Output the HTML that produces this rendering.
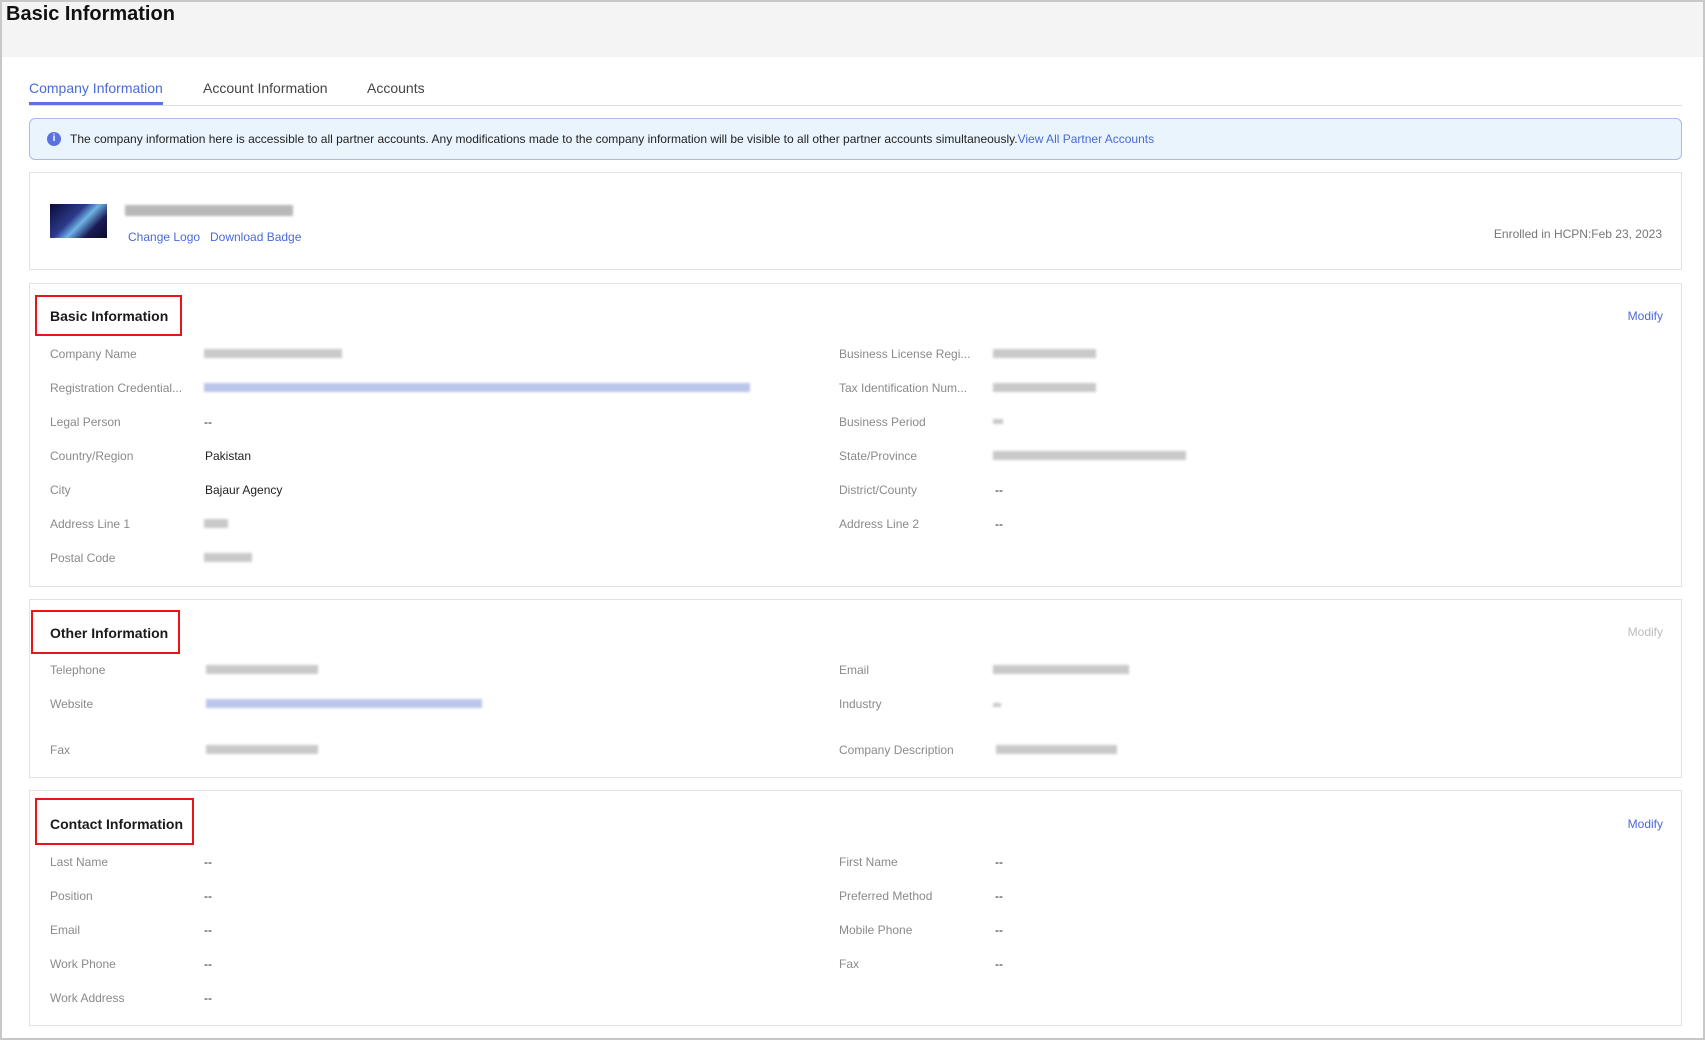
<!DOCTYPE html>
<html><head><meta charset="utf-8"><style>
*{margin:0;padding:0;box-sizing:border-box}
body{width:1705px;height:1040px;position:relative;background:#fff;font-family:"Liberation Sans",Arial,sans-serif;overflow:hidden}
.a{position:absolute;white-space:nowrap}
.frame{position:absolute;left:0;top:0;width:1705px;height:1040px;border:2px solid #c8c8c8;pointer-events:none}
.hdr{position:absolute;left:0;top:0;width:1705px;height:57px;background:#f4f4f4}
.card{position:absolute;left:29px;width:1653px;border:1px solid #e2e2e2;background:#fff}
.red{position:absolute;border:2px solid #e8141a}
.h{font-size:14px;font-weight:bold;color:#1a1a1a}
.l{font-size:12px;color:#8a8a8a;margin-top:1px}
.v{font-size:12px;color:#222;margin-top:1px}
.blue{color:#4a6ad8}
.blur{position:absolute;height:9px;background:#c9c9c9;filter:blur(1.2px);margin-top:1px}
.bb{background:#bcc6ec}
</style></head><body>
<div class="hdr"></div>
<div class="a" style="left:6px;top:3px;font-size:20px;font-weight:bold;color:#111">Basic Information</div>

<div class="a" style="left:29px;top:80px;font-size:14px;color:#4a6ad8">Company Information</div>
<div class="a" style="left:203px;top:80px;font-size:14px;color:#444">Account Information</div>
<div class="a" style="left:367px;top:80px;font-size:14px;color:#444">Accounts</div>
<div class="a" style="left:29px;top:105px;width:1653px;height:1px;background:#dedede"></div>
<div class="a" style="left:29px;top:102px;width:134px;height:3px;background:#5b73e0"></div>

<div class="a" style="left:29px;top:118px;width:1653px;height:42px;background:#e9f4fd;border:1px solid #aab9ee;border-radius:6px"></div>
<div class="a" style="left:47px;top:132px;width:14px;height:14px;border-radius:50%;background:#5b73e0;color:#fff;font-size:10px;font-weight:bold;text-align:center;line-height:14px">i</div>
<div class="a" style="left:70px;top:132px;font-size:12px;color:#222">The company information here is accessible to all partner accounts. Any modifications made to the company information will be visible to all other partner accounts simultaneously.<span class="blue">View All Partner Accounts</span></div>

<div class="card" style="top:172px;height:98px"></div>
<div class="a" style="left:50px;top:204px;width:57px;height:34px;background:linear-gradient(135deg,#0b0b3a,#2b3a8a 40%,#6fb3e6 55%,#1a1a55 75%,#0a0a2a)"></div>
<div class="blur" style="left:125px;top:204px;width:168px;height:11px;background:#b8b8b8"></div>
<div class="a blue" style="left:128px;top:230px;font-size:12px">Change Logo</div>
<div class="a blue" style="left:210px;top:230px;font-size:12px">Download Badge</div>
<div class="a" style="right:43px;top:227px;font-size:12px;color:#777">Enrolled in HCPN:Feb 23, 2023</div>

<!-- basic -->
<div class="card" style="top:283px;height:304px"></div>
<div class="red" style="left:35px;top:295px;width:147px;height:41px"></div>
<div class="a h" style="left:50px;top:308px">Basic Information</div>
<div class="a blue" style="right:42px;top:309px;font-size:12px">Modify</div>

<div class="a l" style="left:50px;top:346px">Company Name</div><div class="blur" style="left:204px;top:348px;width:138px"></div>
<div class="a l" style="left:839px;top:346px">Business License Regi...</div><div class="blur" style="left:993px;top:348px;width:103px"></div>
<div class="a l" style="left:50px;top:380px">Registration Credential...</div><div class="blur bb" style="left:204px;top:382px;width:546px"></div>
<div class="a l" style="left:839px;top:380px">Tax Identification Num...</div><div class="blur" style="left:993px;top:382px;width:103px"></div>
<div class="a l" style="left:50px;top:414px">Legal Person</div><div class="a v" style="left:204px;top:414px">--</div>
<div class="a l" style="left:839px;top:414px">Business Period</div><div class="blur" style="left:993px;top:418px;width:10px;height:5px"></div>
<div class="a l" style="left:50px;top:448px">Country/Region</div><div class="a v" style="left:205px;top:448px">Pakistan</div>
<div class="a l" style="left:839px;top:448px">State/Province</div><div class="blur" style="left:993px;top:450px;width:193px"></div>
<div class="a l" style="left:50px;top:482px">City</div><div class="a v" style="left:205px;top:482px">Bajaur Agency</div>
<div class="a l" style="left:839px;top:482px">District/County</div><div class="a v" style="left:995px;top:482px">--</div>
<div class="a l" style="left:50px;top:516px">Address Line 1</div><div class="blur" style="left:204px;top:518px;width:24px"></div>
<div class="a l" style="left:839px;top:516px">Address Line 2</div><div class="a v" style="left:995px;top:516px">--</div>
<div class="a l" style="left:50px;top:550px">Postal Code</div><div class="blur" style="left:204px;top:552px;width:48px"></div>

<!-- other -->
<div class="card" style="top:599px;height:179px"></div>
<div class="red" style="left:31px;top:610px;width:149px;height:44px"></div>
<div class="a h" style="left:50px;top:625px">Other Information</div>
<div class="a" style="right:42px;top:625px;font-size:12px;color:#bbb">Modify</div>
<div class="a l" style="left:50px;top:662px">Telephone</div><div class="blur" style="left:206px;top:664px;width:112px"></div>
<div class="a l" style="left:839px;top:662px">Email</div><div class="blur" style="left:993px;top:664px;width:136px"></div>
<div class="a l" style="left:50px;top:696px">Website</div><div class="blur bb" style="left:206px;top:698px;width:276px"></div>
<div class="a l" style="left:839px;top:696px">Industry</div><div class="blur" style="left:993px;top:702px;width:8px;height:4px"></div>
<div class="a l" style="left:50px;top:742px">Fax</div><div class="blur" style="left:206px;top:744px;width:112px"></div>
<div class="a l" style="left:839px;top:742px">Company Description</div><div class="blur" style="left:996px;top:744px;width:121px"></div>

<!-- contact -->
<div class="card" style="top:790px;height:236px"></div>
<div class="red" style="left:35px;top:798px;width:159px;height:47px"></div>
<div class="a h" style="left:50px;top:816px">Contact Information</div>
<div class="a blue" style="right:42px;top:817px;font-size:12px">Modify</div>
<div class="a l" style="left:50px;top:854px">Last Name</div><div class="a v" style="left:204px;top:854px">--</div>
<div class="a l" style="left:839px;top:854px">First Name</div><div class="a v" style="left:995px;top:854px">--</div>
<div class="a l" style="left:50px;top:888px">Position</div><div class="a v" style="left:204px;top:888px">--</div>
<div class="a l" style="left:839px;top:888px">Preferred Method</div><div class="a v" style="left:995px;top:888px">--</div>
<div class="a l" style="left:50px;top:922px">Email</div><div class="a v" style="left:204px;top:922px">--</div>
<div class="a l" style="left:839px;top:922px">Mobile Phone</div><div class="a v" style="left:995px;top:922px">--</div>
<div class="a l" style="left:50px;top:956px">Work Phone</div><div class="a v" style="left:204px;top:956px">--</div>
<div class="a l" style="left:839px;top:956px">Fax</div><div class="a v" style="left:995px;top:956px">--</div>
<div class="a l" style="left:50px;top:990px">Work Address</div><div class="a v" style="left:204px;top:990px">--</div>

<div class="frame"></div>
</body></html>
